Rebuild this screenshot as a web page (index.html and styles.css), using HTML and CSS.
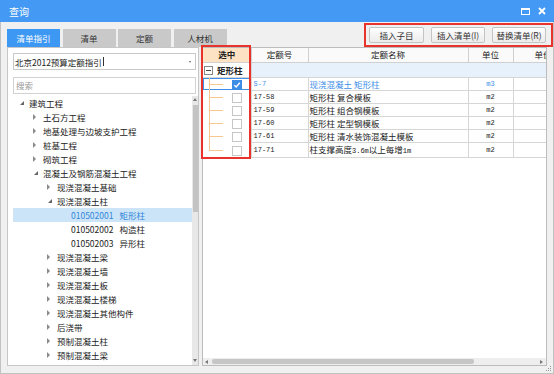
FILE: index.html
```html
<!DOCTYPE html>
<html lang="zh-CN">
<head>
    <meta charset="UTF-8">
    <title>查询</title>
    <link rel="stylesheet" href="styles.css">
</head>
<body>
    <div class="window">
        <div class="titlebar">
            <span class="title">查询</span>
            <div class="win-btns">
                <svg width="9" height="7" viewBox="0 0 9 7"><rect x="0.5" y="0.5" width="8" height="6" fill="none" stroke="#fff" stroke-width="1"/><rect x="0" y="0" width="9" height="2" fill="#fff"/></svg>
                <svg width="8" height="8" viewBox="0 0 8 8"><path d="M1 1L7 7M7 1L1 7" stroke="#fff" stroke-width="1.8"/></svg>
            </div>
        </div>

        <div class="frame">
            <div class="toolbar">
                <div class="tabs">
                    <div class="tab active">清单指引</div>
                    <div class="tab">清单</div>
                    <div class="tab">定额</div>
                    <div class="tab">人材机</div>
                </div>
                <div class="actions">
                    <button class="btn wide">插入子目</button>
                    <button class="btn">插入清单(I)</button>
                    <button class="btn">替换清单(R)</button>
                </div>
            </div>

            <div class="main">
                <!-- 左侧：清单指引树 -->
                <div class="side">
                    <div class="select">北京2012预算定额指引<span class="cursor"></span><span class="caret"></span></div>
                    <div class="search">搜索</div>
                    <div class="tree-wrap">
                        <ul class="tree">
                            <li class="lv0"><span class="arr open"></span>建筑工程</li>
                            <li class="lv1"><span class="arr"></span>土石方工程</li>
                            <li class="lv1"><span class="arr"></span>地基处理与边坡支护工程</li>
                            <li class="lv1"><span class="arr"></span>桩基工程</li>
                            <li class="lv1"><span class="arr"></span>砌筑工程</li>
                            <li class="lv1"><span class="arr open"></span>混凝土及钢筋混凝土工程</li>
                            <li class="lv2"><span class="arr"></span>现浇混凝土基础</li>
                            <li class="lv2"><span class="arr open"></span>现浇混凝土柱</li>
                            <li class="lv3 on"><span class="code">010502001</span>矩形柱</li>
                            <li class="lv3"><span class="code">010502002</span>构造柱</li>
                            <li class="lv3"><span class="code">010502003</span>异形柱</li>
                            <li class="lv2"><span class="arr"></span>现浇混凝土梁</li>
                            <li class="lv2"><span class="arr"></span>现浇混凝土墙</li>
                            <li class="lv2"><span class="arr"></span>现浇混凝土板</li>
                            <li class="lv2"><span class="arr"></span>现浇混凝土楼梯</li>
                            <li class="lv2"><span class="arr"></span>现浇混凝土其他构件</li>
                            <li class="lv2"><span class="arr"></span>后浇带</li>
                            <li class="lv2"><span class="arr"></span>预制混凝土柱</li>
                            <li class="lv2"><span class="arr"></span>预制混凝土梁</li>
                            <li class="lv2"><span class="arr"></span>预制混凝土屋架</li>
                        </ul>
                        <div class="vscroll">
                            <span class="up"></span>
                            <span class="thumb"></span>
                            <span class="down"></span>
                        </div>
                    </div>
                </div>

                <!-- 右侧：定额列表 -->
                <div class="grid">
                    <div class="grid-body">
                        <table>
                            <colgroup>
                                <col class="c-sel"><col class="c-no"><col class="c-name"><col class="c-unit"><col class="c-price">
                            </colgroup>
                            <thead>
                                <tr>
                                    <th class="sel">选中</th>
                                    <th>定额号</th>
                                    <th>定额名称</th>
                                    <th>单位</th>
                                    <th>单价</th>
                                </tr>
                            </thead>
                            <tbody>
                                <tr class="group">
                                    <td class="grp-sel"><span class="toggle"></span><b>矩形柱</b></td>
                                    <td class="grp-fill" colspan="4"></td>
                                </tr>
                                <tr class="cur">
                                    <td class="chk"><span class="box checked"><svg width="8" height="8" viewBox="0 0 8 8"><path d="M1.3 4.2L3.2 6L6.8 1.8" fill="none" stroke="#fff" stroke-width="1.4"/></svg></span></td>
                                    <td class="no">S-7</td>
                                    <td class="name">现浇混凝土 矩形柱</td>
                                    <td class="unit">m3</td>
                                    <td></td>
                                </tr>
                                <tr>
                                    <td class="chk"><span class="box"></span></td>
                                    <td class="no">17-58</td>
                                    <td class="name">矩形柱 复合模板</td>
                                    <td class="unit">m2</td>
                                    <td></td>
                                </tr>
                                <tr>
                                    <td class="chk"><span class="box"></span></td>
                                    <td class="no">17-59</td>
                                    <td class="name">矩形柱 组合钢模板</td>
                                    <td class="unit">m2</td>
                                    <td></td>
                                </tr>
                                <tr>
                                    <td class="chk"><span class="box"></span></td>
                                    <td class="no">17-60</td>
                                    <td class="name">矩形柱 定型钢模板</td>
                                    <td class="unit">m2</td>
                                    <td></td>
                                </tr>
                                <tr>
                                    <td class="chk"><span class="box"></span></td>
                                    <td class="no">17-61</td>
                                    <td class="name">矩形柱 清水装饰混凝土模板</td>
                                    <td class="unit">m2</td>
                                    <td></td>
                                </tr>
                                <tr>
                                    <td class="chk last"><span class="box"></span></td>
                                    <td class="no">17-71</td>
                                    <td class="name">柱支撑高度<span class="mono">3.6m</span>以上每增<span class="mono">1m</span></td>
                                    <td class="unit">m2</td>
                                    <td></td>
                                </tr>
                            </tbody>
                        </table>
                    </div>
                    <div class="hscroll">
                        <span class="left"></span>
                        <span class="thumb"></span>
                        <span class="right"></span>
                    </div>
                    <div class="mark"></div>
                </div>
            </div>
        </div>

        <svg class="grip" width="6" height="6" viewBox="0 0 6 6">
            <rect x="4" y="0" width="1" height="1" fill="#999"/>
            <rect x="2" y="2" width="1" height="1" fill="#999"/><rect x="4" y="2" width="1" height="1" fill="#999"/>
            <rect x="0" y="4" width="1" height="1" fill="#999"/><rect x="2" y="4" width="1" height="1" fill="#999"/><rect x="4" y="4" width="1" height="1" fill="#999"/>
        </svg>
    </div>
</body>
</html>
```

FILE: styles.css
```css
* {
    box-sizing: border-box;
}

body {
    margin: 0;
    font-family: "Noto Sans CJK SC", "Noto Sans", sans-serif;
    font-size: 8.5px;
    color: #222;
    background: #fff;
}

.window {
    position: relative;
    width: 554px;
    height: 374px;
    display: flex;
    flex-direction: column;
    background: #f0f0f0;
}

/* 标题栏 */
.titlebar {
    flex: none;
    height: 22px;
    background: #4399f3;
    color: #fff;
    display: flex;
    align-items: center;
    padding: 0 8px 0 9px;
}

.title {
    flex: 1;
    font-size: 10px;
}

.win-btns {
    display: flex;
    align-items: center;
    gap: 8px;
}

.frame {
    flex: 1;
    min-height: 0;
    display: flex;
    flex-direction: column;
    border: 1px solid #c2c2c2;
    border-top: none;
}

/* 页签 + 按钮 */
.toolbar {
    flex: none;
    height: 25px;
    display: flex;
    align-items: flex-end;
    padding: 0 0 0 6px;
}

.tabs {
    display: flex;
    gap: 2.5px;
}

.tab {
    width: 53px;
    height: 18px;
    line-height: 18px;
    text-align: center;
    background: #c9c9c9;
    color: #333;
}

.tab.active {
    background: #3d98f3;
    color: #fff;
}

.actions {
    margin-left: auto;
    display: flex;
    gap: 7px;
    border: 2px solid #e8322c;
    padding: 2px 5px 2px 3px;
}

.btn {
    width: 54px;
    height: 16px;
    padding: 0;
    border: 1px solid #c4c4c4;
    border-radius: 2px;
    background: linear-gradient(#fdfdfd, #ececec);
    font-family: inherit;
    font-size: 8.5px;
    line-height: 14px;
    color: #333;
}

.btn.wide {
    width: 55px;
}

.main {
    flex: 1;
    min-height: 0;
    display: flex;
    gap: 3px;
    padding: 0 6px 7px 6px;
}

/* 左侧面板 */
.side {
    flex: none;
    width: 192px;
    min-height: 0;
    display: flex;
    flex-direction: column;
    background: #fff;
    border: 1px solid #c6c6c6;
    padding-top: 5px;
}

.select {
    position: relative;
    flex: none;
    height: 17px;
    margin: 0 2px 0 5px;
    border: 1px solid #c9c9c9;
    display: flex;
    align-items: center;
    padding-left: 1px;
}

.cursor {
    width: 1px;
    height: 9px;
    margin-left: 1px;
    background: #333;
}

.caret {
    position: absolute;
    right: 4px;
    top: 7px;
    border-top: 2px solid #666;
    border-left: 1.5px solid transparent;
    border-right: 1.5px solid transparent;
}

.search {
    flex: none;
    height: 17px;
    margin: 7px 2px 0 5px;
    border: 1px solid #d2d2d2;
    padding-left: 2px;
    line-height: 15px;
    color: #9a9a9a;
}

.tree-wrap {
    flex: 1;
    min-height: 0;
    display: flex;
    margin: 2px 0 0 5px;
}

.tree {
    flex: 1;
    list-style: none;
    margin: 0;
    padding: 0;
    overflow: hidden;
}

.tree li {
    height: 14px;
    line-height: 14px;
    display: flex;
    align-items: center;
    white-space: nowrap;
}

.tree li.on {
    background: #cce4f7;
    color: #2f86d9;
}

.lv0 { padding-left: 6px; }
.lv1 { padding-left: 20px; }
.lv2 { padding-left: 34px; }
.lv3 { padding-left: 58px; }

.arr {
    position: relative;
    flex: none;
    width: 10px;
    height: 14px;
}

.arr::before {
    content: '';
    position: absolute;
    left: 0;
    top: 4px;
    border-left: 3px solid #8a8a8a;
    border-top: 3px solid transparent;
    border-bottom: 3px solid transparent;
}

.arr.open::before {
    left: 1px;
    top: 5px;
    border-top: none;
    border-left: 4px solid transparent;
    border-bottom: 4px solid #666;
}

.tree .code {
    margin-right: 6px;
}

.vscroll {
    flex: none;
    width: 6px;
    display: flex;
    flex-direction: column;
    align-items: center;
    background: #e8e8e8;
}

.vscroll .up {
    margin-top: 2px;
    border-bottom: 3px solid #777;
    border-left: 2.5px solid transparent;
    border-right: 2.5px solid transparent;
}

.vscroll .thumb {
    width: 5px;
    height: 107px;
    margin-top: 4px;
    background: #c3c3c3;
}

.vscroll .down {
    margin-top: auto;
    margin-bottom: 3px;
    border-top: 3px solid #777;
    border-left: 2.5px solid transparent;
    border-right: 2.5px solid transparent;
}

/* 右侧表格 */
.grid {
    flex: 1;
    min-width: 0;
    position: relative;
    display: flex;
    flex-direction: column;
    background: #fff;
    border: 1px solid #bcbcbc;
}

.grid-body {
    flex: 1;
    min-height: 0;
    overflow: hidden;
}

table {
    width: 370px;
    table-layout: fixed;
    border-collapse: collapse;
}

.c-sel { width: 48px; }
.c-no { width: 57px; }
.c-name { width: 160px; }
.c-unit { width: 45px; }
.c-price { width: 60px; }

th {
    height: 14px;
    padding: 0;
    line-height: 13px;
    font-weight: normal;
    background: #fafafa;
    border: 1px solid #d0d0d0;
    border-top: none;
}

th.sel {
    background: #fde3c3;
    font-weight: bold;
    border-left: none;
}

td {
    height: 13px;
    padding: 0;
    line-height: 12px;
    border: 1px solid #d6d6d6;
    white-space: nowrap;
    overflow: hidden;
}

.group td {
    height: 14px;
    line-height: 13px;
}

.grp-sel {
    border-left: none;
    border-right: none;
}

.grp-sel b {
    vertical-align: middle;
}

.grp-fill {
    background: #e6f1fb;
}

.toggle {
    position: relative;
    display: inline-block;
    width: 9px;
    height: 9px;
    margin: 0 4px 0 1px;
    border: 1px solid #888;
    vertical-align: middle;
}

.toggle::before {
    content: '';
    position: absolute;
    left: 1px;
    top: 3px;
    width: 5px;
    height: 1px;
    background: #444;
}

td.chk {
    position: relative;
    padding-left: 29px;
    border-left: none;
    border-top: none;
    border-bottom: none;
}

td.chk::before {
    content: '';
    position: absolute;
    left: 6px;
    top: 0;
    bottom: 0;
    width: 1px;
    background: #f6c88d;
}

td.chk.last::before {
    bottom: 50%;
}

td.chk::after {
    content: '';
    position: absolute;
    left: 6px;
    top: 50%;
    width: 14px;
    height: 1px;
    background: #f6c88d;
}

.box {
    display: inline-block;
    width: 10px;
    height: 10px;
    border: 1px solid #c6c6c6;
    background: #fff;
    vertical-align: middle;
}

.box.checked {
    background: #3b8de6;
    border-color: #3b8de6;
}

.box svg {
    display: block;
}

.cur td {
    color: #3d8fe8;
}

.cur td.chk {
    box-shadow: inset 0 0 0 1px #3d8fe8;
}

.no,
.unit,
.mono {
    font-family: "Liberation Mono", monospace;
    font-size: 7px;
}

.no {
    padding-left: 2px;
}

.name {
    padding-left: 1px;
}

.unit {
    text-align: center;
}

.hscroll {
    flex: none;
    height: 7px;
    display: flex;
    align-items: center;
    padding: 0 3px 0 2px;
    background: #eeeeee;
}

.hscroll .left {
    border-right: 3px solid #777;
    border-top: 2.5px solid transparent;
    border-bottom: 2.5px solid transparent;
}

.hscroll .thumb {
    width: 262px;
    height: 5px;
    margin-left: 4px;
    border-radius: 2px;
    background: #c6c6c6;
}

.hscroll .right {
    margin-left: auto;
    border-left: 3px solid #777;
    border-top: 2.5px solid transparent;
    border-bottom: 2.5px solid transparent;
}

/* 红色标注框 */
.mark {
    position: absolute;
    left: -2px;
    top: -3px;
    width: 50px;
    height: 114px;
    border: 2px solid #e8322c;
    pointer-events: none;
}

.grip {
    position: absolute;
    right: 2px;
    bottom: 2px;
}
```
